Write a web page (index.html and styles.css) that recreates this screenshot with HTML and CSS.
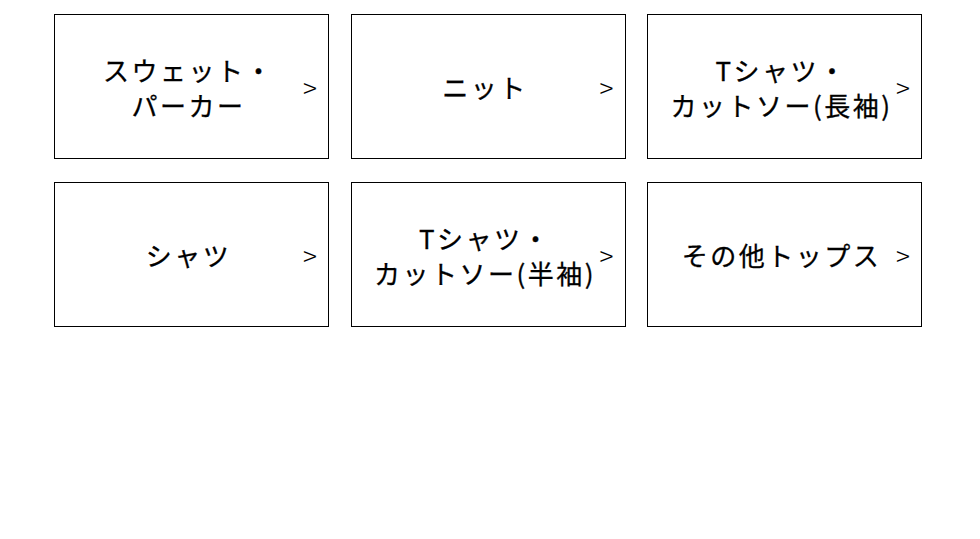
FILE: index.html
```html
<!DOCTYPE html>
<html lang="ja">
<head>
    <meta charset="UTF-8">
    <meta name="viewport" content="width=device-width, initial-scale=1.0">
    <title>トップス</title>
    <link rel="stylesheet" href="styles.css">
</head>
<body>
    <ul class="category-list">
        <li><a class="category" href="#"><span class="category-name">スウェット・<br>パーカー</span><span class="category-arrow">&gt;</span></a></li>
        <li><a class="category" href="#"><span class="category-name">ニット</span><span class="category-arrow">&gt;</span></a></li>
        <li><a class="category" href="#"><span class="category-name">Tシャツ・<br>カットソー(長袖)</span><span class="category-arrow">&gt;</span></a></li>
        <li><a class="category" href="#"><span class="category-name">シャツ</span><span class="category-arrow">&gt;</span></a></li>
        <li><a class="category" href="#"><span class="category-name">Tシャツ・<br>カットソー(半袖)</span><span class="category-arrow">&gt;</span></a></li>
        <li><a class="category" href="#"><span class="category-name">その他トップス</span><span class="category-arrow">&gt;</span></a></li>
    </ul>
</body>
</html>
```

FILE: styles.css
```css
body {
    margin: 0;
    background: #fff;
    color: #000;
    font-family: "Noto Sans CJK JP", "Noto Sans", sans-serif;
}
.category-list {
    list-style: none;
    margin: 0;
    padding: 14px 0 0 54px;
    display: grid;
    grid-template-columns: repeat(3, 275px);
    column-gap: 21.5px;
    row-gap: 23px;
}
.category {
    display: grid;
    grid-template-columns: minmax(0, 1fr) 16px;
    column-gap: 4px;
    align-items: center;
    box-sizing: border-box;
    height: 145px;
    padding: 0 11px 0 25px;
    border: 1px solid #000;
    color: #000;
    text-decoration: none;
}
.category-name {
    justify-self: center;
    text-align: center;
    white-space: nowrap;
    font-size: 26px;
    line-height: 35px;
    letter-spacing: 2.5px;
    font-weight: 400;
    -webkit-text-stroke: 0.3px #000;
}
.category-arrow {
    text-align: right;
    font-size: 26px;
    font-weight: 300;
    color: #000;
}
```
